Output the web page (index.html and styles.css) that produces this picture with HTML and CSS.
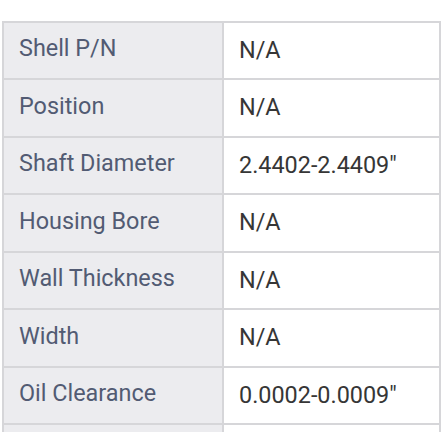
FILE: index.html
```html
<!DOCTYPE html>
<html>
<head>
<meta charset="utf-8">
<link rel="stylesheet" href="styles.css">
</head>
<body>
<div class="frame">
  <div class="spec">
    <div class="row"><div class="label">Shell P/N</div><div class="value">N/A</div></div>
    <div class="row"><div class="label">Position</div><div class="value">N/A</div></div>
    <div class="row"><div class="label">Shaft Diameter</div><div class="value">2.4402-2.4409"</div></div>
    <div class="row"><div class="label">Housing Bore</div><div class="value">N/A</div></div>
    <div class="row"><div class="label">Wall Thickness</div><div class="value">N/A</div></div>
    <div class="row"><div class="label">Width</div><div class="value">N/A</div></div>
    <div class="row"><div class="label">Oil Clearance</div><div class="value">0.0002-0.0009"</div></div>
    <div class="row"><div class="label">&nbsp;</div><div class="value">&nbsp;</div></div>
  </div>
</div>
</body>
</html>
```
FILE: styles.css
```css
html, body {
  margin: 0;
  padding: 0;
  background: #ffffff;
}
.frame {
  padding: 21px 0 0 2px;
  width: 439px;
  height: 411px;
  overflow: hidden;
}
.spec {
  display: flex;
  flex-direction: column;
  font-family: Roboto, "Noto Sans", sans-serif;
  font-size: 23.4px;
}
.row {
  display: flex;
  height: 57px;
  flex-shrink: 0;
}
.row:nth-child(even) {
  height: 58px;
}
.label, .value {
  box-sizing: border-box;
  display: flex;
  align-items: center;
  border-top: 2px solid #d6d6d9;
  border-left: 2px solid #d6d6d9;
}
.label {
  width: 220px;
  padding: 0 0 5px 15px;
  background: #ececef;
  color: #525b73;
}
.value {
  width: 219px;
  padding: 0 0 2px 15px;
  background: #ffffff;
  color: #363636;
  border-right: 2px solid #d6d6d9;
}
```
